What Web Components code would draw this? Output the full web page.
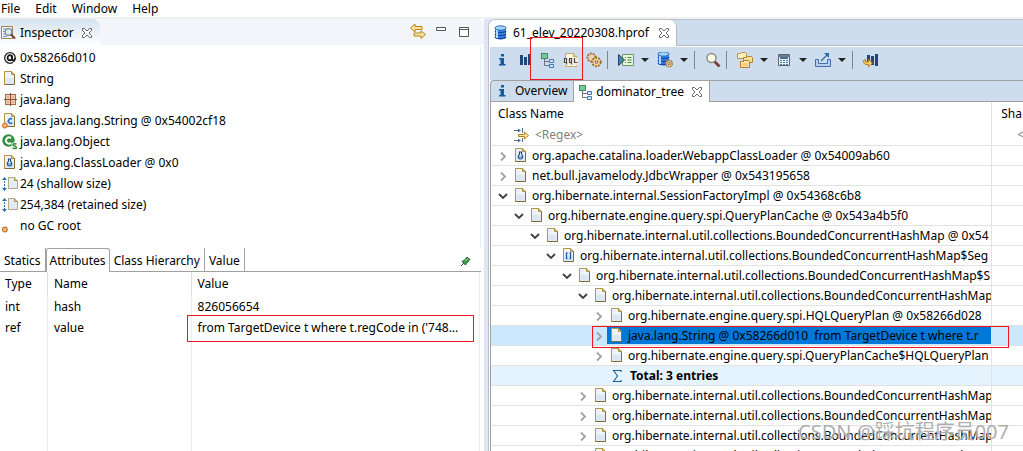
<!DOCTYPE html>
<html lang="en">
<head>
<meta charset="utf-8">
<meta name="viewport" content="width=device-width, initial-scale=1">
<title>Memory Analyzer</title>
<style>
html, body { margin: 0; height: 100%; }
body { font: 12px/20px "Noto Sans", "Open Sans", sans-serif; color: #000; background: #fff; overflow: hidden; }
</style>
</head>
<body>
<mat-app></mat-app>
<script>
const DOC = `<path d="M2.500 .5h7l3 3v10h-10z" fill="#edf2fb"/><path d="M3.500 7h8v6h-8z" fill="#dde6f6"/><path d="M2.500 13.500V.5h7l3 3" fill="none" stroke="#b39440"/><path d="M9.500 .5v3h3z" fill="#e2c078" stroke="#b39440"/><path d="M12.500 3.500v10h-10" fill="none" stroke="#7d6b3c"/>`;
const TREE = `<path d="M1 1h7v6H1z" fill="#3f8c62"/><path d="M2 2h5v4H2z" fill="#7cc79a"/><path d="M4.500 7v6.500H9M4.500 9.500H9" fill="none" stroke="#6b7480"/><path d="M9.500 7.500h4v3h-4zM9.500 12.500h4v3h-4z" fill="#d8e8fa" stroke="#3e78bb"/>`;
const BARS = `<path d="M3 3h3v10H3zM7 5h3v8H7zM11 2h3v11h-3z" fill="#21467c"/>`;
const DB = `<path d="M2 3v9c0 1.500 2 2.500 5.500 2.500S13 13.500 13 12V3z" fill="#3f86dc"/><path d="M2 6c1 2 10 2 11 0M2 9c1 2 10 2 11 0M2 12c1 2 10 2 11 0" fill="none" stroke="#1547b0" stroke-width="1.300"/><path d="M4 4v9" stroke="#a9dcff" stroke-width="2"/><ellipse cx="7.500" cy="3" rx="5.500" ry="2.200" fill="#a4d4f7" stroke="#2467c4"/>`;
const INFO = `<path d="M7 2h3v2.500H7zM5 6h5v6h1.500v1.500H5V12h1.500V7.500H5z" fill="#15599f"/>`;
const ICONS = {
  doc: DOC,
  tree: TREE,
  bars: BARS,
  db: DB,
  info: INFO,
  at: `<circle cx="8" cy="8" r="5.300" fill="none" stroke="#222" stroke-width="1.300"/><path d="M10 5.500v4c0 1.600 2.600 1 3-1.500" fill="none" stroke="#111" stroke-width="1.400"/><ellipse cx="7.800" cy="7.800" rx="2.200" ry="2.600" fill="none" stroke="#111" stroke-width="1.700"/><path d="M11 12h3v2h-3z" fill="#fff"/>`,
  pack: `<path d="M3 2h11v11H3z" fill="#a86a4c"/><path d="M4 3h4v4H4zM9 3h4v4H9zM4 8h4v4H4zM9 8h4v4H9z" fill="#f0cfb4"/><path d="M2 7.500h13M8.500 1v13" stroke="#8b4a35"/><path d="M5 5h2M10 5h2M5 10h2M10 10h2" stroke="#c98f6c"/>`,
  classObj: DOC + `<path d="M10.200 6.200a2.300 2.300 0 1 0 0 3.600" fill="none" stroke="#2572bb" stroke-width="1.600"/><circle cx="2.800" cy="12.500" r="2.500" fill="#f6b26b" stroke="#c9742a"/>`,
  classC: `<circle cx="6.500" cy="6.500" r="6.200" fill="#358f42"/><path d="M9 4.300a3 3 0 1 0 0 4.400" fill="none" stroke="#fff" stroke-width="1.900"/><path d="M14.500 10.300c-1-1-3.500-.9-3.500.5s3.500 1 3.500 2.600-3 1.500-4 .4" fill="none" stroke="#fff" stroke-width="3"/><path d="M14.500 10.300c-1-1-3.500-.9-3.500.5s3.500 1 3.500 2.600-3 1.500-4 .4" fill="none" stroke="#2d8a3c" stroke-width="1.500"/>`,
  loader: DOC + `<path d="M6.500 4v2.500c-2 1.200-1.500 4.500 1 4.500s3-3.300 1-4.500V4z" fill="#fff" stroke="#1c4f86" stroke-width="1.200"/><path d="M6 8h3v2H6z" fill="#6cb0ea"/>`,
  array: DOC + `<path d="M6.500 5h-1v5.500h1M8.500 5h1v5.500h-1" fill="none" stroke="#1b63ad" stroke-width="1.300"/>`,
  size: `<path d="M2.500 2v12" stroke="#2a6ca8" stroke-dasharray="2 1"/><path d="M0 4l2.500-3L5 4zM0 12l2.500 3L5 12z" fill="#2a6ca8"/><path d="M6.500 1.500h6l3 3v8h-9z" fill="#e4ebf8" stroke="#b3a883"/><path d="M12.500 1.500v3h3" fill="#e2c078" stroke="#b39440"/>`,
  root: `<circle cx="2.800" cy="11.500" r="2.400" fill="#f9bf80" stroke="#c9742a" stroke-width="1.200"/>`,
  inspect: `<path d="M1.500 1.500h11v12h-11z" fill="#f4f8fd" stroke="#9a8146"/><path d="M3 4h3M3 6.500h2M3 9h2M3 11.500h4" stroke="#6d93c8"/><circle cx="8.500" cy="7" r="3.400" fill="#dbeaf5" stroke="#768a99" stroke-width="1.300"/><path d="M11 9.500l4 4" stroke="#7d3b2c" stroke-width="2"/>`,
  close: `<path d="M3.500 3.500h2l2.500 2.500 2.500-2.500h2v2l-2.500 2.500 2.500 2.500v2h-2l-2.500-2.500-2.500 2.500h-2v-2l2.500-2.500-2.500-2.500z" fill="#fff" stroke="#666"/>`,
  link: `<path d="M.5 5L5 1v2.500h7v3H5V9z" fill="#fbe7a2" stroke="#b98217"/><path d="M15.500 11.500L11 8v2H4v3h7v2.500z" fill="#fbe7a2" stroke="#b98217"/>`,
  min: `<path d="M3.500 4.500h9v3h-9z" fill="#fff" stroke="#555"/>`,
  max: `<path d="M3.500 4.500h9v9h-9zM3 6.500h10" fill="#fff" stroke="#555"/>`,
  pin: `<path d="M4 13l4-4" stroke="#333"/><path d="M5 8.500l2-1 2.500-2.500.5-1 3 2.500-1 1-2.500 3-1 1.500z" fill="#3f9a50" stroke="#1b5e2c"/><path d="M8.500 8l2.500-2.500" stroke="#a7e0ae"/>`,
  oql: `<path d="M2.500 1.500h8l3 3v10h-11z" fill="#fdf8e6" stroke="#c5ab66"/><path d="M10.500 1.500v3h3" fill="#ecd08a" stroke="#c5ab66"/><path d="M1 6h14v7H1z" fill="#f3efe4"/><path d="M1.500 6.500h2v4h-2zM6.500 6.500h2v4h-2zM8.500 10v2.500M3.500 10v2.500M11.500 6v4.500h3" fill="none" stroke="#4d4a48" stroke-width="1.200"/>`,
  gears: `<circle cx="5.500" cy="5.500" r="4" fill="#ead6b4" stroke="#9a7040" stroke-width="2" stroke-dasharray="1.800 1"/><circle cx="10.500" cy="10" r="4.200" fill="#f4dfad" stroke="#a36b28" stroke-width="2" stroke-dasharray="2 1"/><circle cx="10.500" cy="10" r="1.400" fill="#cddded" stroke="#8b5a22"/>`,
  run: `<path d="M4.500 2.500h11v11h-11z" fill="#eaf5e0" stroke="#6c9b62"/><path d="M7 5.500h1M7 8h1M7 10.500h1M9.500 5.500h4M9.500 8h4M9.500 10.500h4" stroke="#3f8840" stroke-width="1.200"/><path d="M.5 2.500l6 5.500-6 5.500z" fill="#4d86a8" stroke="#1e3f66"/>`,
  dbgear: `<g transform="translate(-1 -1)">${DB}</g><circle cx="12" cy="11.500" r="3.200" fill="#f5dca0" stroke="#a36b28" stroke-width="1.600" stroke-dasharray="1.600 .8"/><circle cx="12" cy="11.500" r="1.100" fill="#fff" stroke="#8b5a22"/>`,
  search: `<path d="M9.500 9.500l5 5" stroke="#7d3b32" stroke-width="2.600"/><circle cx="6.500" cy="6" r="4.500" fill="#fffbe8" stroke="#8c8c84" stroke-width="1.500"/>`,
  folders: `<path d="M.5 1.500h3l1-1h4l1 1v5h-9z" fill="#fbeeb8" stroke="#c09142"/><path d="M6.500 5.500h3l1-1h4l1 1v5h-9z" fill="#f8de93" stroke="#b98430"/><path d="M3.500 9.500h3l1-1h4l1 1v6h-9z" fill="#fbe9ab" stroke="#b07a28"/><path d="M5 11h6v3H5z" fill="#f3cf78"/>`,
  calc: `<path d="M2.500 2.500h11v11h-11z" fill="#eaf3fa" stroke="#5a6772"/><path d="M3 3h10v2H3z" fill="#6d7c86"/><path d="M4 5h8v2H4z" fill="#416f96"/><path d="M4 8.500h2M7 8.500h2M10 8.500h2M4 10.500h2M7 10.500h2M10 10.500h2M4 12.500h2M7 12.500h2M10 12.500h2" stroke="#4779a5"/>`,
  share: `<path d="M.5 7.500h3v4h9v-4h3v7H.5z" fill="#b8cdf0" stroke="#4569ad"/><path d="M6 9l6-6" stroke="#2a6ca8" stroke-width="1.300"/><path d="M9 1h5v5z" fill="#2a6ca8"/>`,
  compare: `<path d="M4 3h3v9H4zM8 4h3v9H8zM12 2h3v12h-3z" fill="#21467c"/><path d="M.5 8.500l2-1v2.500h3V7.500l4 3.500-4 4v-2.500H3c-2-.5-2.500-2-2.500-4z" fill="#f5d268" stroke="#b67f1e"/>`,
  filter: `<path d="M1 3.500h6M1 13.500h6" stroke="#4f6f86"/><path d="M5 1.500l3 2-3 2zM5 11.500l3 2-3 2z" fill="#4f6f86"/><path d="M9.500 1v5M9.500 11v4" stroke="#4f6f86"/><path d="M5.500 7.500h6V5l4 3.500-4 3.500V9.500h-6z" fill="#fbe7a2" stroke="#b98217"/>`,
  sigma: `<path d="M12 4V2.500H4.500L8.500 8l-4 5.500H12V12" fill="none" stroke="#1d5d92" stroke-width="1.100"/>`,
  right: `<path d="M6 4.500l4 4-4 4" fill="none" stroke="#a2a2a2" stroke-width="1.800"/>`,
  down: `<path d="M4 6l4 4 4-4" fill="none" stroke="#404040" stroke-width="1.800"/>`,
  caret: `<path d="M4 6h8l-4 4z" fill="#222"/>`
};

class Base extends HTMLElement {
  mount(css, html) {
    const t = document.createElement('template');
    t.innerHTML = `<style>
      *{box-sizing:border-box}
      button,input{font:inherit;color:inherit;background:none;border:0;padding:0;margin:0;display:flex;align-items:center;white-space:nowrap}
      ${css}</style>${html}`;
    this.attachShadow({ mode: 'open' }).append(t.content.cloneNode(true));
  }
}

customElements.define('ui-icon', class extends Base {
  connectedCallback() {
    if (this.shadowRoot) return;
    this.mount(`:host{display:block;width:16px;height:16px;flex:none} svg{display:block}`,
      `<svg width="16" height="16" viewBox="0 0 16 16" aria-hidden="true">${ICONS[this.getAttribute('name')]}</svg>`);
  }
});

customElements.define('red-mark', class extends Base {
  connectedCallback() {
    if (this.shadowRoot) return;
    this.mount(`:host{display:block;position:absolute;box-sizing:border-box;border:1px solid #f01820;pointer-events:none;z-index:2}`, ``);
  }
});

customElements.define('menu-bar', class extends Base {
  connectedCallback() {
    if (this.shadowRoot) return;
    this.mount(`:host{display:block;border-bottom:2px solid #f0f0f0}
      nav{display:flex;gap:15px;padding-left:1px;height:17px}`,
      `<nav>${['File', 'Edit', 'Window', 'Help'].map(m => `<button>${m}</button>`).join('')}</nav>`);
  }
});

customElements.define('inspector-list', class extends Base {
  connectedCallback() {
    if (this.shadowRoot) return;
    const rows = [['at', '0x58266d010'], ['doc', 'String'], ['pack', 'java.lang'],
      ['classObj', 'class java.lang.String @ 0x54002cf18'], ['classC', 'java.lang.Object'],
      ['loader', 'java.lang.ClassLoader @ 0x0'], ['size', '24 (shallow size)'],
      ['size', '254,384 (retained size)'], ['root', 'no GC root']];
    this.mount(`:host{display:block;border-right:1px solid #e6eefa;margin:2px 3px 0 0}
      ul{list-style:none;margin:0;padding:0 0 12px}
      li{display:flex;align-items:center;gap:2px;height:21px;padding-left:2px}`,
      `<ul>${rows.map(([i, t]) => `<li><ui-icon name="${i}"></ui-icon><span>${t}</span></li>`).join('')}</ul>`);
  }
});

customElements.define('attribute-tabs', class extends Base {
  connectedCallback() {
    if (this.shadowRoot) return;
    this.mount(`:host{display:flex;height:24px;margin-right:3px;border-bottom:1px solid #a0a0a0;align-items:stretch}
      button{padding:2px 4px 0;border-right:1px solid #a0a0a0}
      button:first-child{padding-left:2px;padding-right:3px;border:0}
      button.on{border:1px solid #a0a0a0;border-bottom:0;border-radius:3px 3px 0 0;background:#fff;margin-bottom:-1px;padding:1px 3px 0}
      .pin{border:0;margin-left:auto;padding:2px 8px 0 0}`,
      `<button>Statics</button><button class="on">Attributes</button><button>Class Hierarchy</button><button>Value</button><button class="pin" aria-label="Pin"><ui-icon name="pin"></ui-icon></button>`);
  }
});

customElements.define('attribute-table', class extends Base {
  connectedCallback() {
    if (this.shadowRoot) return;
    this.mount(`:host{display:flex;flex:1;margin-right:4px;border-right:1px solid #e6eefa}
      table{width:100%;height:100%;border-spacing:0;table-layout:fixed}
      th,td{font-weight:400;text-align:left;padding:0 0 0 6px;height:21px;border-right:1px solid #e6eefa;white-space:nowrap}
      th{height:24px;border-color:#dcdcdc}
      td:first-child,th:first-child{padding-left:5px}
      th:last-child,td:last-child{border-right:0}
      td.mark{position:relative}
      red-mark{inset:-2px 5px -4px -5px}
      .rest td{height:auto}`,
      `<table><colgroup><col style="width:10%"><col style="width:30%"><col></colgroup>
      <thead><tr><th>Type</th><th>Name</th><th>Value</th></tr></thead>
      <tbody><tr><td>int</td><td>hash</td><td>826056654</td></tr>
      <tr><td>ref</td><td>value</td><td class="mark">from TargetDevice t where t.regCode in ('748...<red-mark></red-mark></td></tr>
      <tr class="rest"><td></td><td></td><td></td></tr></tbody></table>`);
  }
});

customElements.define('inspector-view', class extends Base {
  connectedCallback() {
    if (this.shadowRoot) return;
    this.mount(`:host{display:flex;flex-direction:column;min-width:0;background:#fff}
      header{display:flex;height:26px;background:#f4f5fb;border-radius:0 6px 0 0}
      .tab{display:flex;align-items:center;width:100px;padding-top:2px;background:linear-gradient(#d4e2ee,#fff);border-radius:0 8px 0 0}
      h2{font:inherit;margin:0 5px 0 4px}
      .tools{display:flex;gap:7px;margin-left:auto;padding:4px 12px 0 0}
      .tools button{align-items:flex-start}`,
      `<header><div class="tab"><ui-icon name="inspect"></ui-icon><h2>Inspector</h2><button aria-label="Close"><ui-icon name="close"></ui-icon></button></div>
      <div class="tools"><button aria-label="Link"><ui-icon name="link"></ui-icon></button><button aria-label="Minimize"><ui-icon name="min"></ui-icon></button><button aria-label="Maximize"><ui-icon name="max"></ui-icon></button></div></header>
      <inspector-list></inspector-list><attribute-tabs></attribute-tabs><attribute-table></attribute-table>`);
  }
});

customElements.define('tool-bar', class extends Base {
  connectedCallback() {
    if (this.shadowRoot) return;
    const b = n => `<button aria-label="${n}"><ui-icon name="${n}"></ui-icon></button>`;
    const s = n => b(n) + `<button class="more" aria-label="${n} menu"><ui-icon name="caret"></ui-icon></button>`;
    this.mount(`:host{display:flex;position:relative;height:33px;padding-bottom:8px;background:#cddded;align-items:center}
      button{width:23px;height:24px;justify-content:center;flex:none}
      .more{width:16px}
      hr{width:1px;height:18px;border:0;background:#7c8792;margin:0 6px 0 2px;flex:none}
      red-mark{left:40px;top:-10px;width:53px;height:43px}`,
      b('info') + b('bars') + b('tree') + b('oql') + b('gears') + '<hr>' + s('run') + s('dbgear') + '<hr>' + b('search') + '<hr>' + s('folders') + s('calc') + s('share') + '<hr>' + b('compare') + '<red-mark></red-mark>');
  }
});

customElements.define('dominator-table', class extends Base {
  connectedCallback() {
    if (this.shadowRoot) return;
    const H = 'org.hibernate.internal.util.collections.BoundedConcurrentHashMap';
    const rows = [
      [0, 'right', 'loader', 'org.apache.catalina.loader.WebappClassLoader @ 0x54009ab60'],
      [0, 'right', 'doc', 'net.bull.javamelody.JdbcWrapper @ 0x543195658'],
      [0, 'down', 'doc', 'org.hibernate.internal.SessionFactoryImpl @ 0x54368c6b8'],
      [1, 'down', 'doc', 'org.hibernate.engine.query.spi.QueryPlanCache @ 0x543a4b5f0'],
      [2, 'down', 'doc', H + ' @ 0x54'],
      [3, 'down', 'array', H + '$Seg'],
      [4, 'down', 'doc', H + '$S'],
      [5, 'down', 'doc', H],
      [6, 'right', 'doc', 'org.hibernate.engine.query.spi.HQLQueryPlan @ 0x58266d028'],
      [6, 'right', 'doc', 'java.lang.String @ 0x58266d010&nbsp; from TargetDevice t where t.r', 'sel'],
      [6, 'right', 'doc', 'org.hibernate.engine.query.spi.QueryPlanCache$HQLQueryPlan'],
      [6, '', 'sigma', 'Total: 3 entries', 'total'],
      [5, 'right', 'doc', H], [5, 'right', 'doc', H], [5, 'right', 'doc', H], [5, 'right', 'doc', H]];
    this.mount(`:host{display:block;flex:1;min-height:0;overflow:hidden;background:#fff}
      table{width:100%;border-spacing:0;table-layout:fixed}
      th,td{font-weight:400;text-align:left;padding:0;height:20px;border-bottom:1px solid #e2e2e2;white-space:nowrap}
      th:first-child,td:first-child{border-right:1px solid #e2e2e2}
      th{height:23px;border-bottom:0;padding-left:7px}
      th+th{padding-left:9px}
      .regex td{color:#808080}
      .regex input{width:80px;margin-left:6px;height:18px}
      .regex .cell{padding-left:22px}
      .regex td+td{padding-left:25px}
      .cell{display:flex;align-items:center;height:19px;overflow:hidden;padding-left:calc(4px + 16px * var(--lv, 0))}
      .cell .icon{margin:0 3px 0 2px}
      .gap{width:16px;flex:none}
      .label{display:flex;align-items:center;flex:1;min-width:0}
      .sel td{background:#cce8ff;position:relative}
      .sel .label{background:#0078d7;height:17px}
      .total td{background:#e5f3ff;font-weight:700}
      .total .icon{margin-right:5px}
      .sel red-mark{left:101px;top:0;right:-18px;height:22px}`,
      `<table><colgroup><col style="width:94.2%"><col></colgroup>
      <thead><tr><th>Class Name</th><th>Sha</th></tr></thead><tbody>
      <tr class="regex"><td><div class="cell"><ui-icon name="filter"></ui-icon><input type="text" aria-label="Class name filter" value="&lt;Regex&gt;"></div></td><td>&lt;</td></tr>
      ${rows.map(([lv, tw, ic, tx, cl = '']) => `<tr class="${cl}"><td><div class="cell" style="--lv:${lv}">${tw ? `<ui-icon name="${tw}"></ui-icon>` : '<span class="gap"></span>'}<div class="label"><ui-icon class="icon" name="${ic}"></ui-icon><span>${tx}</span></div></div>${cl === 'sel' ? '<red-mark></red-mark>' : ''}</td><td></td></tr>`).join('')}
      </tbody></table>`);
  }
});

customElements.define('editor-view', class extends Base {
  connectedCallback() {
    if (this.shadowRoot) return;
    this.mount(`:host{display:flex;flex-direction:column;min-width:0;border:1px solid #bcc1c9;border-right:0;border-bottom:0;border-radius:7px 0 0 0;padding-left:1px;background:#fff;overflow:hidden}
      .files{display:flex;height:26px;background:#cddded;border-bottom:1px solid #b4b9c4;margin-bottom:1px}
      .file{display:flex;align-items:center;background:#fff;border-right:1px solid #b4b9c4;border-radius:0 7px 0 0;margin-bottom:-1px;padding:0 4px 0 3px}
      .file span{margin:0 7px 0 4px}
      .panes{display:flex;height:22px;background:#cddded;border:1px solid #a0a0a0;border-right:0;border-radius:4px 0 0 0}
      .panes button{padding:0 3px}
      .panes .on{background:#fff;border:1px solid #a0a0a0;border-width:0 1px;margin-bottom:-1px;padding:0 4px}
      .panes span{margin:0 3px 0 5px}
      .panes .on span{margin:0 5px 0 2px}
      dominator-table{border-left:1px solid #a0a0a0}`,
      `<div class="files"><div class="file"><ui-icon name="db"></ui-icon><span>61_elev_20220308.hprof</span><button aria-label="Close"><ui-icon name="close"></ui-icon></button></div></div>
      <tool-bar></tool-bar>
      <div class="panes"><button><ui-icon name="info"></ui-icon><span>Overview</span></button><button class="on"><ui-icon name="tree"></ui-icon><span>dominator_tree</span><ui-icon name="close"></ui-icon></button></div>
      <dominator-table></dominator-table>`);
  }
});

customElements.define('water-mark', class extends Base {
  connectedCallback() {
    if (this.shadowRoot) return;
    this.mount(`:host{display:block;position:absolute;right:14px;bottom:5px;z-index:3;font:20px/28px "Noto Sans","Noto Sans CJK SC",sans-serif;color:rgba(120,120,120,.6);text-shadow:0 0 1px #fff;pointer-events:none;white-space:nowrap}`, `<slot></slot>`);
  }
});

customElements.define('mat-app', class extends Base {
  connectedCallback() {
    if (this.shadowRoot) return;
    this.mount(`:host{display:flex;flex-direction:column;height:100vh;position:relative;overflow:hidden}
      main{flex:1;min-height:0;display:grid;grid-template-columns:minmax(0,484fr) minmax(0,535fr);column-gap:4px;background:#dfe5f5}`,
      `<menu-bar></menu-bar><main><inspector-view></inspector-view><editor-view></editor-view></main><water-mark>CSDN @踩坑程序员007</water-mark>`);
  }
});
</script>
</body>
</html>
